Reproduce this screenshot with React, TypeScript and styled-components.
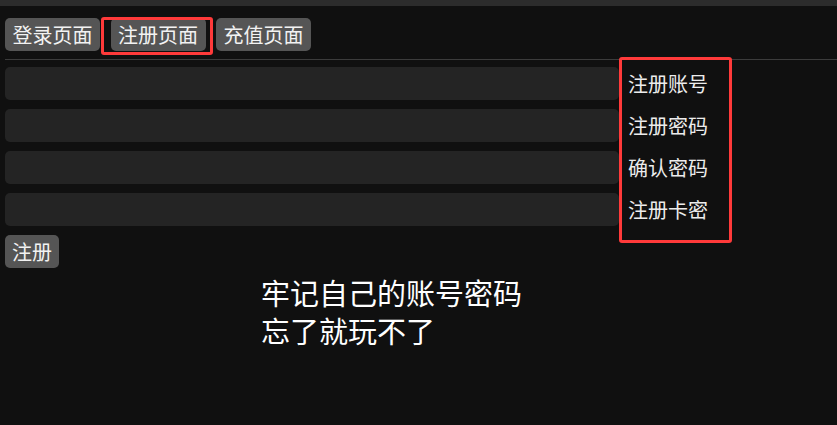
import styled, { createGlobalStyle } from 'styled-components'

const GlobalStyle = createGlobalStyle`
  html, body {
    margin: 0;
    padding: 0;
    background: #101010;
    font-family: "Noto Sans CJK SC", "Noto Sans", sans-serif;
  }
`

const TopStrip = styled.div`
  height: 6px;
  background: #2c2c2c;
`

const Page = styled.div`
  padding-left: 5px;
`

const Tabs = styled.div`
  display: flex;
  gap: 10.5px;
  margin-top: 12px;
  height: 33px;
`

const TabWrap = styled.div<{ $marked?: boolean }>`
  position: relative;
  display: flex;

  ${p => p.$marked && `
    &::after {
      content: '';
      position: absolute;
      top: -1px;
      left: -10px;
      right: -7px;
      bottom: -4px;
      border: 3px solid #ff3a3a;
      border-radius: 3px;
      pointer-events: none;
    }
  `}
`

const TabButton = styled.button<{ $pad?: number }>`
  height: 33px;
  padding: 0 ${p => p.$pad ?? 7.5}px;
  border: none;
  border-radius: 5px;
  background: #555555;
  color: #f2f2f2;
  font-family: inherit;
  font-size: 20px;
  line-height: 33px;
`

const Divider = styled.div`
  height: 1px;
  margin-top: 8px;
  background: #3c3c3c;
`

const Main = styled.div`
  display: flex;
  align-items: flex-start;
`

const FormColumn = styled.div`
  width: 614px;
  padding-top: 7px;
  display: flex;
  flex-direction: column;
  gap: 9px;
`

const Field = styled.div`
  height: 33px;
  border-radius: 5px;
  background: #242424;
`

const SubmitButton = styled(TabButton)`
  align-self: flex-start;
`

const Notice = styled.div`
  margin-top: -4px;
  padding-left: 256px;
  color: #ffffff;
  font-size: 29px;
  line-height: 38px;
`

const FieldList = styled.div`
  margin-top: -3px;
  width: 95px;
  padding: 3px 6px 9px 6px;
  border: 3px solid #ff3a3a;
  border-radius: 3px;
`

const FieldLabel = styled.div`
  height: 42px;
  line-height: 42px;
  color: #ececec;
  font-size: 20px;
  white-space: nowrap;
`

const tabs = ['登录页面', '注册页面', '充值页面']
const labels = ['注册账号', '注册密码', '确认密码', '注册卡密']

export default function App() {
  return (
    <>
      <GlobalStyle />
      <TopStrip />
      <Page>
        <Tabs>
          {tabs.map((t, i) => (
            <TabWrap key={t} $marked={i === 1}>
              <TabButton>{t}</TabButton>
            </TabWrap>
          ))}
        </Tabs>
        <Divider />
        <Main>
          <FormColumn>
            {labels.map(l => (
              <Field key={l} />
            ))}
            <SubmitButton $pad={7}>注册</SubmitButton>
            <Notice>
              牢记自己的账号密码
              <br />
              忘了就玩不了
            </Notice>
          </FormColumn>
          <FieldList>
            {labels.map(l => (
              <FieldLabel key={l}>{l}</FieldLabel>
            ))}
          </FieldList>
        </Main>
      </Page>
    </>
  )
}
